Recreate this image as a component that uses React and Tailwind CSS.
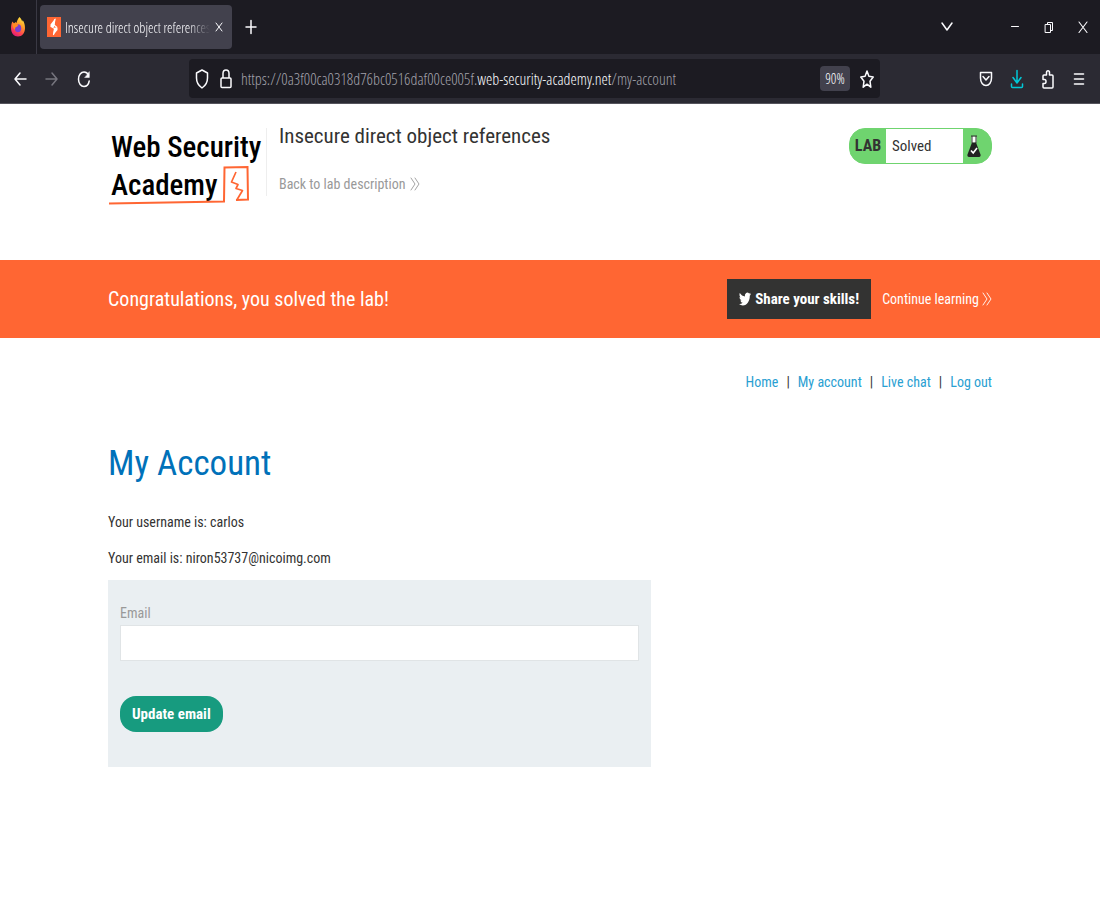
import { useState } from 'react';

const navLinks = ['Home', 'My account', 'Live chat', 'Log out'];

function FirefoxIcon() {
  return (
    <svg width="16" height="22" viewBox="0 0 16 22">
      <defs>
        <linearGradient id="flame" x1="0.8" y1="0" x2="0.3" y2="1">
          <stop offset="0" stopColor="#fff044" />
          <stop offset="0.4" stopColor="#ff9a28" />
          <stop offset="0.75" stopColor="#ff4052" />
          <stop offset="1" stopColor="#e0187a" />
        </linearGradient>
      </defs>
      <path
        d="M9.500 1c1.800 1.500 2 3 2.800 4.500.3-.5.300-1 .3-1.500C14.300 6 15 9 15 12c0 5-3 8.500-7 8.500s-7-3.500-7-8.500c0-2.500.5-5 1.500-6.500L4 7.500l1.500-1.500 1 1C7 4.500 8 2.500 9.500 1z"
        fill="url(#flame)"
      />
      <ellipse cx="8" cy="12.200" rx="3.200" ry="4" fill="#7a3fd0" />
      <path d="M2.500 8c2-1 3.800.2 6 .8l-1.500 2c-1.500 0-2 1-2 3-1.500-1-2.500-3.500-2.500-5.800z" fill="#ff8a22" />
    </svg>
  );
}

function BurpIcon() {
  return (
    <svg width="14" height="20" viewBox="0 0 14 20" className="shrink-0">
      <rect width="14" height="20" fill="#ff6633" />
      <path d="M8.500 1 3.500 7.500v2.500h3.500zM6 18.500l4.500-5.500V10.500H7.500z" fill="#fff" />
      <path d="M8 2 7 8l3 2.500M4 9.500l3.500 2L6.500 18" stroke="#fff" strokeWidth="1.200" fill="none" />
    </svg>
  );
}

function Icon({ w, h, stroke = 1.5, className, children }) {
  return (
    <svg
      width={w}
      height={h}
      viewBox={`0 0 ${w} ${h}`}
      fill="none"
      stroke="currentColor"
      strokeWidth={stroke}
      strokeLinecap="round"
      strokeLinejoin="round"
      className={className}
    >
      {children}
    </svg>
  );
}

function DoubleChevron() {
  return (
    <Icon w={10} h={14} stroke={0.9}>
      <path d="M1 1l4 6-4 6M5 1l4 6-4 6" />
    </Icon>
  );
}

function TabBar({ onClose }) {
  return (
    <div className="flex h-[54px] items-center bg-[#1c1b22] text-[#fbfbfe]">
      <div className="flex h-full w-9 items-center justify-center">
        <FirefoxIcon />
      </div>
      <div className="h-full w-px bg-[#3a3944]" />
      <div className="ml-[3px] flex h-11 w-48 items-center gap-1 rounded bg-[#42414d] pr-2 pl-[7px]">
        <BurpIcon />
        <span className="min-w-0 flex-1 overflow-hidden text-[14px] whitespace-nowrap [mask-image:linear-gradient(to_right,black_85%,transparent)]">
          Insecure direct object references
        </span>
        <button aria-label="Close tab" onClick={onClose}>
          <Icon w={10} h={12} stroke={1}>
            <path d="M2 2l6 8M8 2l-6 8" />
          </Icon>
        </button>
      </div>
      <button aria-label="New tab" className="ml-3">
        <Icon w={14} h={16}>
          <path d="M7 1.500v13M2 8h10" />
        </Icon>
      </button>
      <div className="ml-auto flex items-center">
        <button aria-label="List all tabs" className="mr-[54px]">
          <Icon w={14} h={12}>
            <path d="M2 2l5 7 5-7" />
          </Icon>
        </button>
        <div className="flex items-center gap-5 pr-2.5">
          <button aria-label="Minimize">
            <Icon w={14} h={14} stroke={1}>
              <path d="M3.500 6.500h7" />
            </Icon>
          </button>
          <button aria-label="Restore">
            <Icon w={14} h={14} stroke={1}>
              <path d="M3.500 4.500h5v8h-5zM5.500 4.500v-2h5v8h-2" />
            </Icon>
          </button>
          <button aria-label="Close window">
            <Icon w={14} h={14} stroke={1.100}>
              <path d="M3 2l8 10.500M11 2L3 12.500" />
            </Icon>
          </button>
        </div>
      </div>
    </div>
  );
}

function AddressBar() {
  return (
    <div className="flex h-[50px] items-center border-b border-[#55545c] bg-[#2b2a33] text-[#fbfbfe]">
      <div className="flex w-[189px] shrink-0 items-center gap-4 pl-3">
        <button aria-label="Back">
          <Icon w={16} h={18}>
            <path d="M14 9H3M8 3L3 9l5 6" />
          </Icon>
        </button>
        <button aria-label="Forward" className="text-[#76757e]">
          <Icon w={16} h={18}>
            <path d="M2 9h11M8 3l5 6-5 6" />
          </Icon>
        </button>
        <button aria-label="Reload">
          <Icon w={16} h={20}>
            <path d="M12.500 6C11.500 4 10 3 8 3 5 3 2.500 6 2.500 10.200S5 17.500 8 17.500c2.700 0 4.600-2 5.200-5.500" />
            <path d="M13.300 3v5.500H9z" fill="currentColor" strokeWidth="0.5" />
          </Icon>
        </button>
      </div>
      <div className="flex h-[39px] min-w-0 flex-1 items-center rounded bg-[#1c1b22] px-1.5">
        <Icon w={14} h={22}>
          <path d="M7 2l5.500 3v5C12.500 15 10 18 7 20 4 18 1.500 15 1.500 10V5z" />
        </Icon>
        <Icon w={14} h={22} className="ml-2.5">
          <path d="M3 10h8c.6 0 1 .4 1 1v7.500c0 .6-.4 1-1 1H3c-.6 0-1-.4-1-1V11c0-.6.400-1 1-1zM4 10V5.500C4 3.500 5.200 2 7 2s3 1.500 3 3.500V10" />
        </Icon>
        <span className="ml-2 min-w-0 flex-1 truncate text-[16px] text-[#a3a2ab]">
          https://0a3f00ca0318d76bc0516daf00ce005f.
          <span className="text-[#fbfbfe]">web-security-academy.net</span>/my-account
        </span>
        <button className="h-[25px] w-[30px] rounded-sm bg-[#42414d] text-[14px]">90%</button>
        <button aria-label="Bookmark" className="ml-2.5">
          <Icon w={14} h={20}>
            <path d="M7 2l1.900 5.200 4.300.8-3.200 4.200.8 6L7 15.200 3.200 18.200l.8-6L.8 8l4.300-.8z" />
          </Icon>
        </button>
      </div>
      <div className="flex w-[220px] shrink-0 items-center justify-end gap-[17px] pr-3.5">
        <button aria-label="Pocket">
          <Icon w={14} h={18}>
            <path d="M1.500 2.500h11V8c0 4.500-2.500 7.500-5.500 7.500S1.500 12.500 1.500 8zM4 6.500L7 10l3-3.500" />
          </Icon>
        </button>
        <button aria-label="Downloads" className="text-[#00c8d7]">
          <Icon w={14} h={20}>
            <path d="M7 1.500v12M3 8.500l4 5.500 4-5.500M1.500 15v2.500c0 .6.400 1 1 1h9c.6 0 1-.4 1-1V15" />
          </Icon>
        </button>
        <button aria-label="Extensions">
          <Icon w={14} h={20}>
            <path d="M3 6h2.500V3.500c0-2.500 3-2.500 3 0V6H11c.6 0 1 .4 1 1v11c0 .6-.4 1-1 1H3c-.6 0-1-.4-1-1v-3.500h1.500c2 0 2-4 0-4H2V7c0-.6.400-1 1-1z" />
          </Icon>
        </button>
        <button aria-label="Menu">
          <Icon w={14} h={16} stroke={1.600}>
            <path d="M2.500 3h9M2.500 8h9M2.500 13h9" />
          </Icon>
        </button>
      </div>
    </div>
  );
}

function Logo() {
  return (
    <a
      href="#academy"
      className="relative h-[68px] w-[159px] shrink-0 border-r border-[#eeeeee] pl-[3px] text-[29px] leading-[38px] font-medium text-black"
    >
      <span className="block whitespace-nowrap">Web Security</span>
      <span className="block">Academy</span>
      <svg className="absolute top-0 left-0" width="158" height="82" viewBox="0 0 158 82" fill="none" stroke="#ff6633">
        <path d="M1 75.500L116 73.500 116.500 39.500 139.500 39 140 71.500 128 72" strokeWidth="2" />
        <path d="M128 44l-4.500 10 6.500 2.500-2 4 6.500 2-6 10" strokeWidth="1.700" strokeLinejoin="round" />
      </svg>
    </a>
  );
}

function LabStatus() {
  return (
    <div className="flex h-9 w-[143px] shrink-0 overflow-hidden rounded-2xl border border-[#6fd46f] bg-[#6fd46f] text-[#333332]">
      <span className="flex w-9 items-center justify-center text-[16px] font-bold">LAB</span>
      <span className="flex flex-1 items-center bg-white pl-[6px] text-[15px]">Solved</span>
      <span className="flex w-7 items-center pl-1">
        <svg width="14" height="24" viewBox="0 0 14 24">
          <path d="M4.500 2.500h5v6l-5 .5z" fill="#fff" />
          <path d="M4 2h6M5 2v7M9 2v7" stroke="#333332" fill="none" />
          <path d="M5 8.500h4l4.500 12c.4 1.200-.2 2.500-1.500 2.500H2C.7 23 .1 21.700.5 20.500z" fill="#222" />
          <path d="M4 16.500l2.200 2.500L10 14" stroke="#fff" strokeWidth="1.600" fill="none" />
        </svg>
      </span>
    </div>
  );
}

export default function App() {
  const [email, setEmail] = useState('');
  const [tabOpen, setTabOpen] = useState(true);

  return (
    <div className="min-h-screen bg-white">
      <div className="font-['Open_Sans_Condensed_Light','Roboto_Condensed','Open_Sans',sans-serif]">
        <TabBar onClose={() => setTabOpen(!tabOpen)} />
        <AddressBar />
      </div>

      <div className="font-['Roboto_Condensed','Roboto',sans-serif] text-[14px] leading-5 text-[#333332]">
        {/* Lab header */}
        <header className="mx-auto flex h-[156px] max-w-[884px] items-start pt-6">
          <Logo />
          <div className="ml-3 flex-1">
            <h2 className="text-[21px] leading-4">Insecure direct object references</h2>
            <a href="#lab" className="mt-[30px] flex items-center gap-1 text-[#999999]">
              Back to lab description
              <DoubleChevron />
            </a>
          </div>
          <LabStatus />
        </header>

        {/* Solved banner */}
        <section className="bg-[#ff6633] text-white">
          <div className="mx-auto flex h-[78px] max-w-[884px] items-center">
            <p className="flex-1 text-[20px]">Congratulations, you solved the lab!</p>
            <button className="flex h-10 w-36 items-center justify-center gap-1 bg-[#333332] text-[15px] font-bold">
              <svg width="12" height="16" viewBox="0 0 24 24" preserveAspectRatio="none" fill="currentColor">
                <path d="M23.950 4.570a10 10 0 0 1-2.820.77 4.960 4.960 0 0 0 2.160-2.720c-.95.55-2 .96-3.130 1.180a4.920 4.920 0 0 0-8.380 4.480C7.690 8.090 4.070 6.130 1.640 3.160a4.820 4.820 0 0 0-.67 2.480c0 1.710.87 3.210 2.190 4.100a4.900 4.900 0 0 1-2.230-.62v.06a4.920 4.920 0 0 0 3.950 4.830 5 5 0 0 1-2.210.08 4.940 4.940 0 0 0 4.600 3.420A9.870 9.870 0 0 1 0 19.540a13.990 13.990 0 0 0 7.550 2.210c9.050 0 14-7.500 14-13.990 0-.21 0-.42-.02-.63a9.940 9.940 0 0 0 2.460-2.550z" />
              </svg>
              Share your skills!
            </button>
            <a href="#learning" className="ml-[11px] flex items-center gap-[3px]">
              Continue learning
              <DoubleChevron />
            </a>
          </div>
        </section>

        {/* Account page */}
        <main className="mx-auto max-w-[884px] pt-[34px]">
          <nav className="flex justify-end">
            {navLinks.map((link, i) => (
              <span key={link}>
                {i > 0 && <span className="mx-2">|</span>}
                <a href="#nav" className="text-[#29a0d2]">
                  {link}
                </a>
              </span>
            ))}
          </nav>
          <h1 className="mt-12 text-[35px] leading-12 text-[#0071b9]">My Account</h1>
          <p className="mt-6">Your username is: carlos</p>
          <p className="mt-4">Your email is: niron53737@nicoimg.com</p>
          <form
            className="mt-3 max-w-[543px] bg-[#eaeff2] px-3 pt-[23px] pb-[35px]"
            onSubmit={(e) => e.preventDefault()}
          >
            <label htmlFor="email" className="block text-[#999999]">
              Email
            </label>
            <input
              id="email"
              type="email"
              value={email}
              onChange={(e) => setEmail(e.target.value)}
              className="mt-0.5 block h-9 w-full border border-[#e0e4e6] bg-white px-2 outline-none"
            />
            <button className="mt-[35px] h-9 rounded-2xl bg-[#179b7f] px-3 text-[15px] font-bold text-white">
              Update email
            </button>
          </form>
        </main>
      </div>
    </div>
  );
}
